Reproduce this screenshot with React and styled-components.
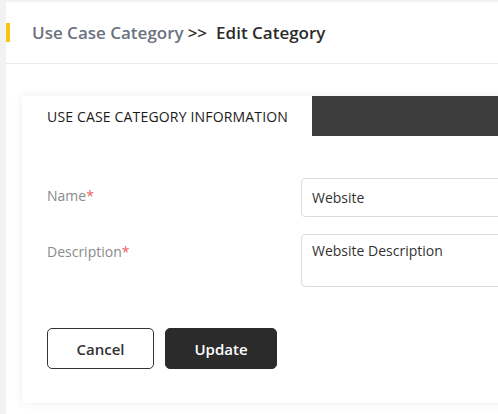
import React from 'react';
import styled, { createGlobalStyle } from 'styled-components';

const GlobalStyle = createGlobalStyle`
  html, body {
    margin: 0;
    padding: 0;
    background: #f2f2f2;
    font-family: "Open Sans", "Liberation Sans", sans-serif;
  }
  * { box-sizing: border-box; }
`;

function App() {
  return (
    <>
      <GlobalStyle />
      <Page>
        <Panel>
          <Header>
            <Accent />
            <Crumb>Use Case Category</Crumb>
            <Separator>&gt;&gt;</Separator>
            <Title>Edit Category</Title>
          </Header>
          <Content>
            <Card>
              <Tabs>
                <Tab active>USE CASE CATEGORY INFORMATION</Tab>
                <TabFill />
              </Tabs>
              <Form>
                <Row>
                  <Label>Name<Req>*</Req></Label>
                  <Input defaultValue="Website" />
                </Row>
                <Row>
                  <Label>Description<Req>*</Req></Label>
                  <TextArea defaultValue="Website Description" />
                </Row>
                <Actions>
                  <Button>Cancel</Button>
                  <Button primary>Update</Button>
                </Actions>
              </Form>
            </Card>
          </Content>
        </Panel>
      </Page>
    </>
  );
}

const Page = styled.div`
  width: 498px;
  height: 414px;
  padding: 2px 0 0 6px;
  overflow: hidden;
`;

const Panel = styled.div`
  background: #ffffff;
  min-height: 412px;
  width: 700px;
`;

const Header = styled.div`
  height: 62px;
  display: flex;
  align-items: center;
  border-bottom: 1px solid #ebebeb;
`;

const Accent = styled.span`
  width: 4px;
  height: 19px;
  background: #f5c518;
  margin-right: 22px;
`;

const Crumb = styled.span`
  font-size: 17px;
  font-weight: 600;
  color: #6b7280;
`;

const Separator = styled.span`
  font-size: 17px;
  font-weight: 600;
  color: #333;
  margin: 0 9px 0 4px;
`;

const Title = styled.span`
  font-size: 17px;
  font-weight: 600;
  color: #2b2b2b;
`;

const Content = styled.div`
  padding: 32px 0 0 16px;
`;

const Card = styled.div`
  background: #fff;
  width: 640px;
  box-shadow: 0 0 10px rgba(0, 0, 0, 0.07);
`;

const Tabs = styled.div`
  display: flex;
  height: 40px;
`;

const Tab = styled.div`
  width: 290px;
  display: flex;
  align-items: center;
  padding-left: 25px;
  font-size: 14px;
  font-weight: 500;
  letter-spacing: 0.17px;
  color: #1a1a1a;
  background: ${p => (p.active ? '#fff' : '#3d3d3d')};
`;

const TabFill = styled.div`
  flex: 1;
  background: #3d3d3d;
`;

const Form = styled.div`
  padding: 42px 0 34px 25px;
`;

const Row = styled.div`
  display: flex;
  align-items: flex-start;
  margin-bottom: 17px;
`;

const Label = styled.div`
  width: 254px;
  padding-top: 8px;
  font-size: 14px;
  line-height: 19px;
  color: #8a8a8a;
`;

const Req = styled.span`
  color: #f05a5a;
`;

const fieldStyles = `
  width: 300px;
  border: 1px solid #dcdcdc;
  border-radius: 4px;
  padding: 0 10px;
  font-family: "Open Sans", "Liberation Sans", sans-serif;
  font-size: 14px;
  color: #333;
  background: #fff;
  outline: none;
`;

const Input = styled.input`
  ${fieldStyles}
  height: 39px;
`;

const TextArea = styled.textarea`
  ${fieldStyles}
  height: 53px;
  padding-top: 6px;
  resize: none;
`;

const Actions = styled.div`
  display: flex;
  gap: 11px;
  margin-top: 41px;
`;

const Button = styled.button`
  height: 41px;
  width: ${p => (p.primary ? '112px' : '107px')};
  border-radius: 5px;
  border: 1px solid ${p => (p.primary ? '#2b2b2b' : '#333')};
  background: ${p => (p.primary ? '#2b2b2b' : '#fff')};
  color: ${p => (p.primary ? '#fff' : '#333')};
  font-family: "Open Sans", "Liberation Sans", sans-serif;
  font-size: 15px;
  font-weight: 600;
  cursor: pointer;
`;

export default App;
